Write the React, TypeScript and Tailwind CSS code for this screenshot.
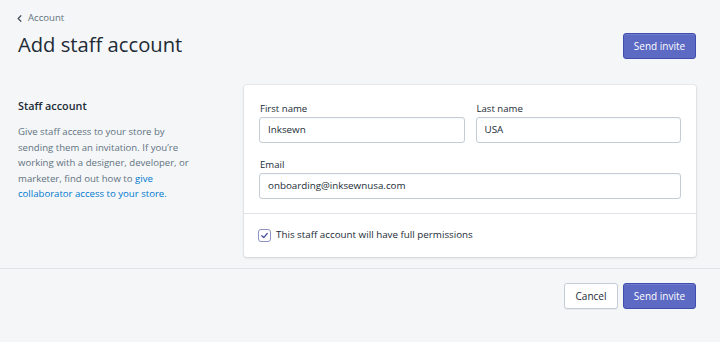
import { ChevronLeft } from "lucide-react"

const font = "font-['Open_Sans','Noto_Sans',sans-serif]"

export default function App() {
  return (
    <div className={`min-h-[342px] w-[720px] bg-[#f4f6f8] text-[#212b36] ${font}`}>
      <div className="pl-[14px] pr-[24px] pt-[11px]">
        <a className="flex h-[14px] items-center gap-[3px] text-[9.6px] text-[#637381]">
          <ChevronLeft size={11} strokeWidth={2.6} className="text-[#454f5b]" />
          <span>Account</span>
        </a>
        <div className="mt-[4px] flex items-start justify-between">
          <h1 className="pl-[4px] text-[20.2px] leading-[30px] font-normal">
            Add staff account
          </h1>
          <button className="mt-[4px] h-[26px] w-[73px] rounded-[3px] border border-[#3f4eae] bg-[#5c6ac4] text-[10px] text-white shadow-[inset_0_1px_0_0_#6f7bcb]">
            Send invite
          </button>
        </div>
      </div>

      <div className="mt-[26px] flex pl-[18px] pr-[24px]">
        <div className="w-[226px] pt-[12px]">
          <h2 className="text-[10.8px] leading-[18px] font-semibold">Staff account</h2>
          <p className="mt-[9px] text-[9.6px] leading-[15.5px] text-[#637381]">
            Give staff access to your store by
            <br />
            sending them an invitation. If you’re
            <br />
            working with a designer, developer, or
            <br />
            marketer, find out how to <a className="text-[#007ace]">give</a>
            <br />
            <a className="text-[#007ace]">collaborator access to your store.</a>
          </p>
        </div>

        <div className="flex-1 rounded-[3px] bg-white shadow-[0_0_0_1px_rgba(63,63,68,0.05),0_1px_3px_0_rgba(63,63,68,0.15)]">
          <div className="px-[15px] pt-[16px] pb-[14px]">
            <div className="grid grid-cols-2 gap-x-[11px]">
              <Field label="First name" value="Inksewn" />
              <Field label="Last name" value="USA" />
            </div>
            <div className="mt-[14px]">
              <Field label="Email" value="onboarding@inksewnusa.com" />
            </div>
          </div>
          <div className="flex h-[44px] items-center gap-[5px] border-t border-[#dfe3e8] px-[14px]">
            <span className="flex h-[13px] w-[13px] items-center justify-center rounded-[3px] border border-[#8a93c4] bg-white">
              <svg width="9" height="9" viewBox="0 0 10 10" fill="none">
                <path d="M2 5.2 L4.2 7.3 L8 2.8" stroke="#47519e" strokeWidth="1.4" strokeLinecap="round" strokeLinejoin="round" />
              </svg>
            </span>
            <span className="text-[9.8px]">This staff account will have full permissions</span>
          </div>
        </div>
      </div>

      <div className="mt-[11px] flex justify-end gap-[5px] border-t border-[#dfe3e8] pr-[24px] pt-[14px]">
        <button className="h-[26px] w-[54px] rounded-[3px] border border-[#c4cdd5] bg-white text-[10px] text-[#212b36] shadow-[0_1px_0_0_rgba(22,29,37,0.05)]">
          Cancel
        </button>
        <button className="h-[26px] w-[73px] rounded-[3px] border border-[#3f4eae] bg-[#5c6ac4] text-[10px] text-white shadow-[inset_0_1px_0_0_#6f7bcb]">
          Send invite
        </button>
      </div>
    </div>
  )
}

function Field({ label, value }: { label: string; value: string }) {
  return (
    <label className="block">
      <div className="h-[16px] pl-[1px] text-[9.6px] leading-[16px]">{label}</div>
      <div className="flex h-[26px] items-center rounded-[3px] border border-[#c4cdd5] px-[8px] text-[9.8px] shadow-[inset_0_1px_0_0_rgba(99,115,129,0.05)]">
        {value}
      </div>
    </label>
  )
}
